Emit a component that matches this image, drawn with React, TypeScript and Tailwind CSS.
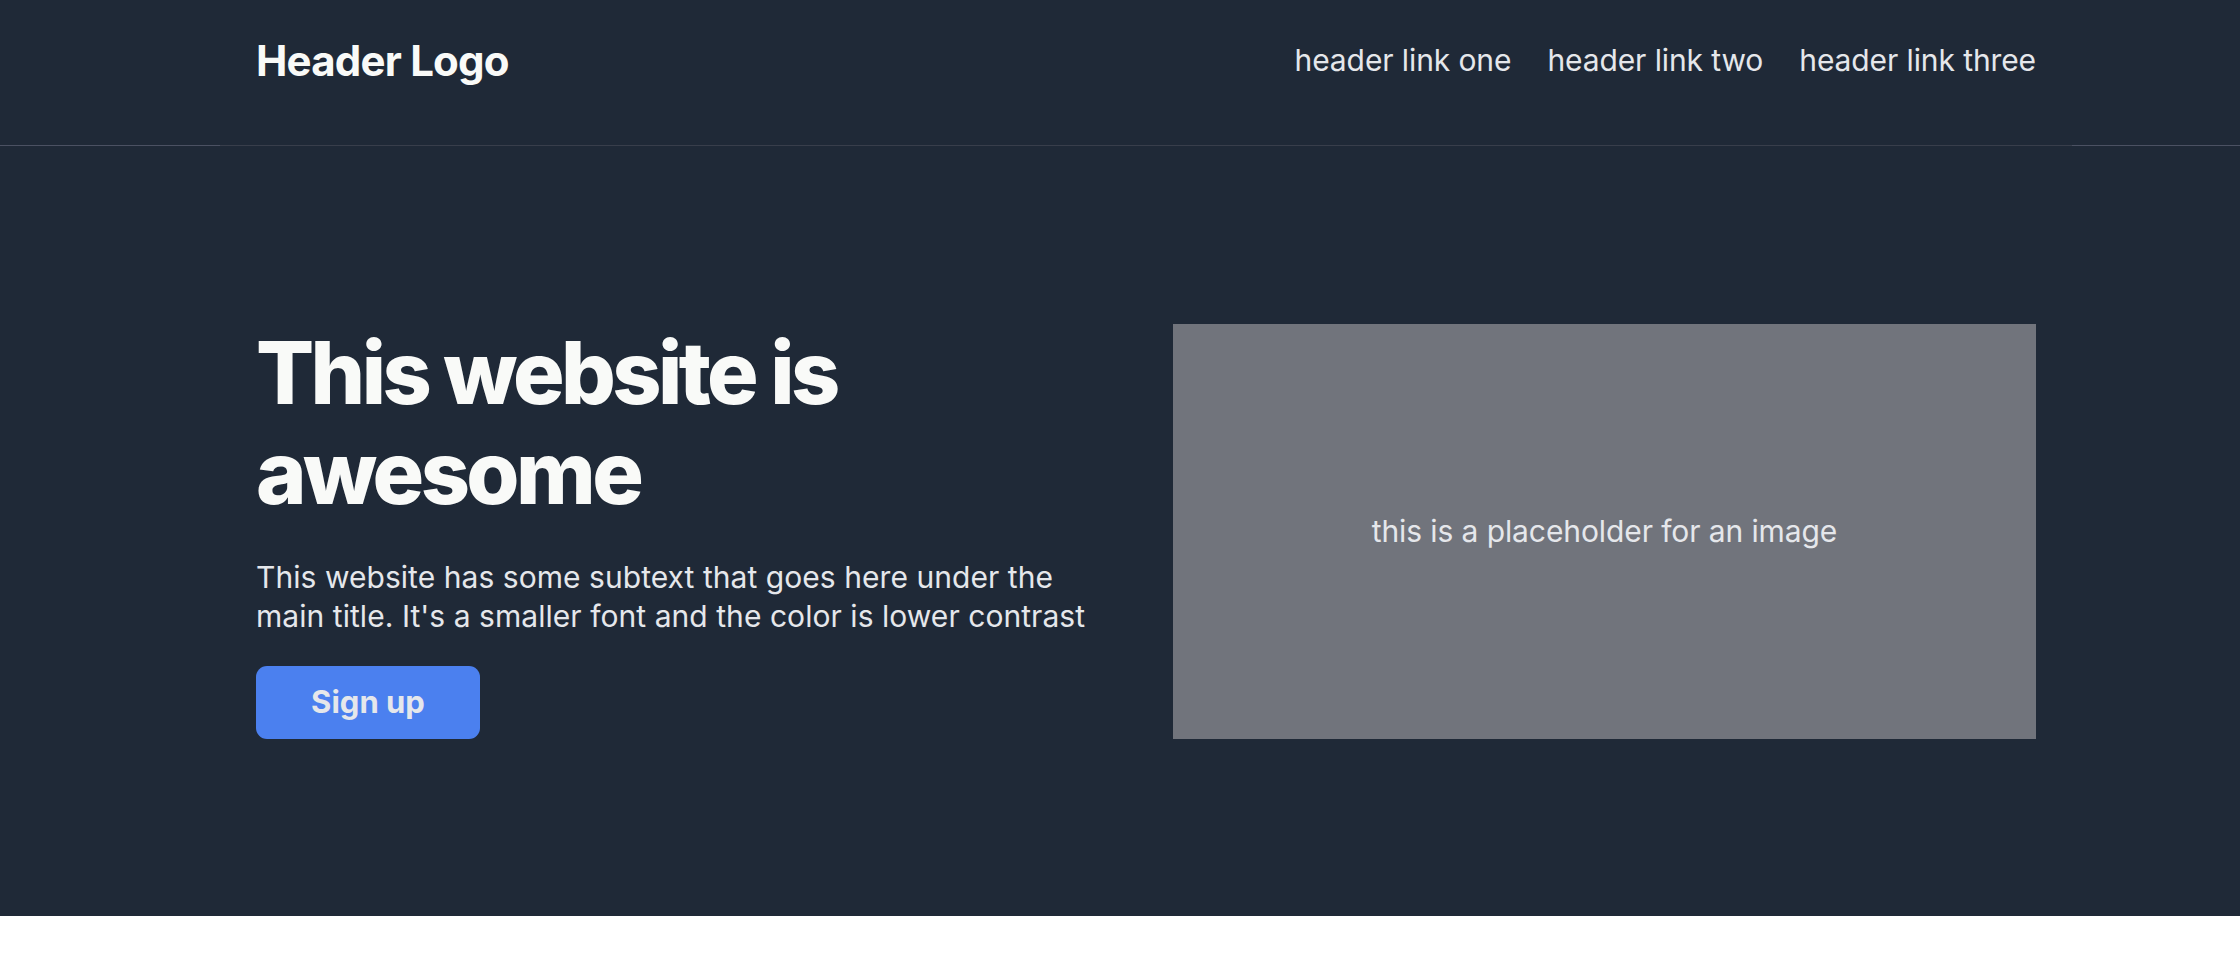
export default function App() {
    return (
        <div className="min-h-screen bg-white font-['Inter','Liberation_Sans',sans-serif]">
            <div className="bg-[#1f2937]">
                {/* Header */}
                <header className="ml-[256px] flex h-[145px] w-[1780px] items-center justify-between pb-[24px]">
                    <span className="text-[42px] font-bold tracking-[-0.8px] text-[#f9faf8]">Header Logo</span>
                    <nav className="flex items-center gap-[36px] text-[30px] tracking-[-0.1px] text-[#e5e7eb]">
                        <a href="#">header link one</a>
                        <a href="#">header link two</a>
                        <a href="#">header link three</a>
                    </nav>
                </header>
                <div className="flex h-px">
                    <div className="w-[220px] bg-[#4b5162]" />
                    <div className="flex-1 bg-[#383e4b]" />
                    <div className="w-[168px] bg-[#4b5162]" />
                </div>

                {/* Hero */}
                <section className="ml-[256px] flex h-[770px] w-[1780px] items-center justify-between">
                    <div className="flex w-[850px] flex-col items-start">
                        <h1 className="text-[86px] leading-[100px] font-extrabold tracking-[-3.6px] text-[#f9faf8]">
                            This website is awesome
                        </h1>
                        <p className="mt-[35px] text-[30px] leading-[38.6px] tracking-[0.05px] text-[#e5e7eb]">
                            This website has some subtext that goes here under the main title. It's a smaller font and the color is lower contrast
                        </p>
                        <button className="mt-[30px] h-[73px] w-[224px] rounded-[11px] bg-[#4b80ef] text-[31px] font-bold text-[#e5e7eb]">
                            Sign up
                        </button>
                    </div>
                    <div className="flex h-[415px] w-[863px] items-center justify-center bg-[#71747c] text-[30px] tracking-[-0.1px] text-[#e5e7eb]">
                        this is a placeholder for an image
                    </div>
                </section>
            </div>
        </div>
    );
}
